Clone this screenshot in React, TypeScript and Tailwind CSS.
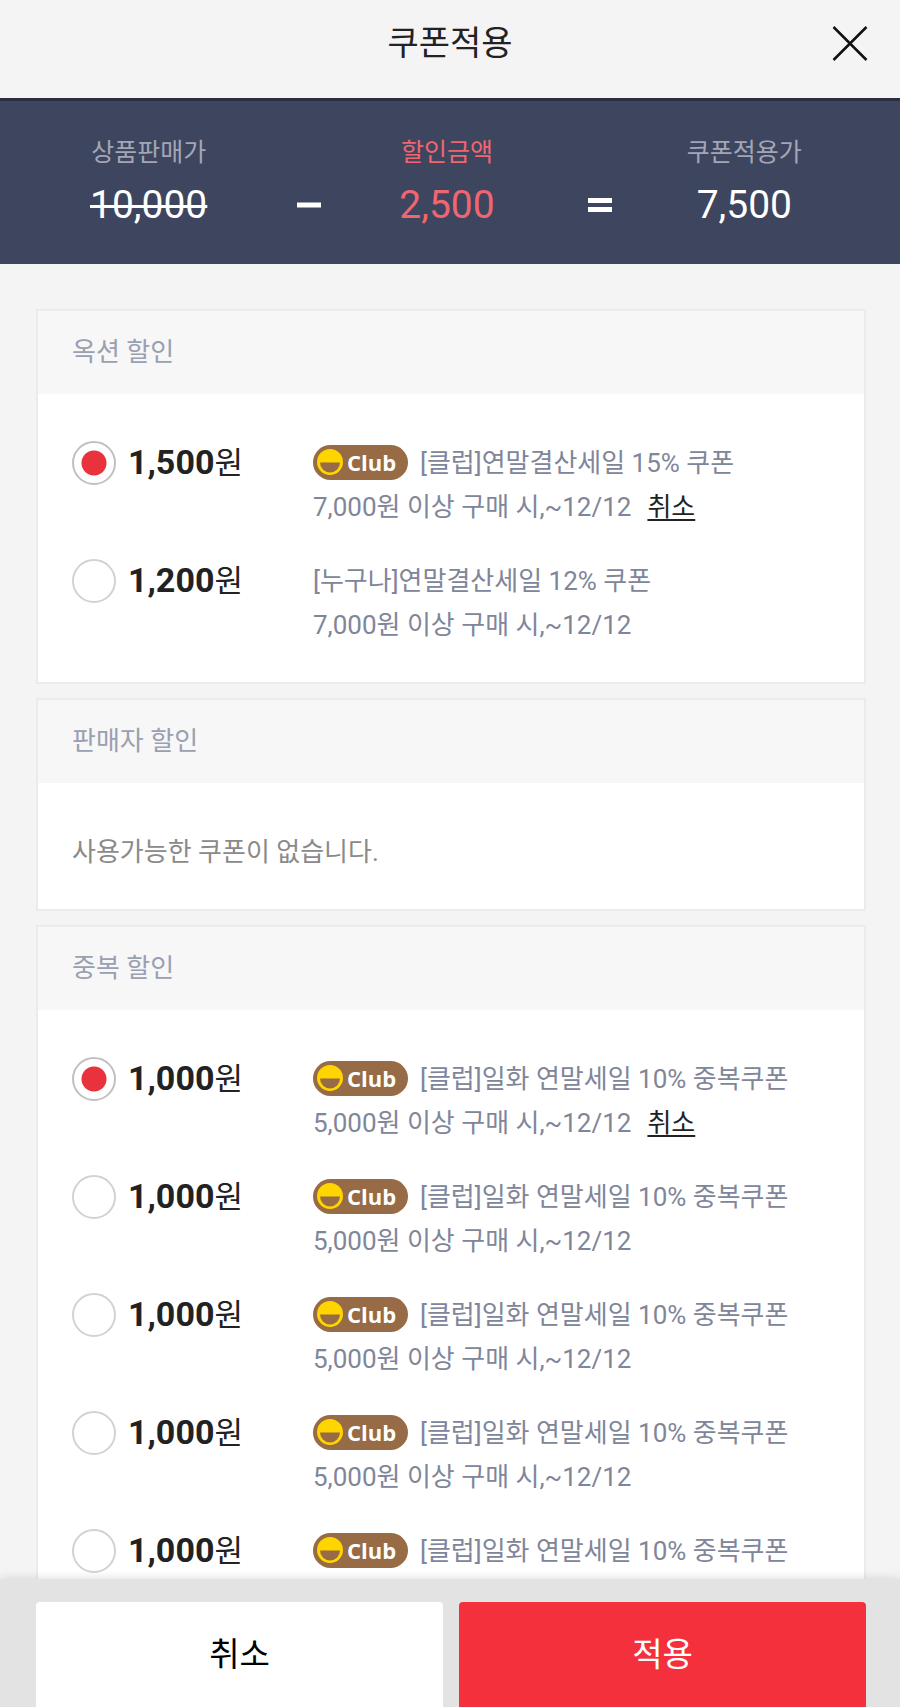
import { useState } from 'react';

type Coupon = {
  id: string;
  amount: string;
  title: string;
  condition?: string;
  club?: boolean;
};

const auctionCoupons: Coupon[] = [
  { id: 'a1', amount: '1,500', title: '[클럽]연말결산세일 15% 쿠폰', condition: '7,000원 이상 구매 시,~12/12', club: true },
  { id: 'a2', amount: '1,200', title: '[누구나]연말결산세일 12% 쿠폰', condition: '7,000원 이상 구매 시,~12/12' },
];

const extraCoupons: Coupon[] = [
  { id: 'e1', amount: '1,000', title: '[클럽]일화 연말세일 10% 중복쿠폰', condition: '5,000원 이상 구매 시,~12/12', club: true },
  { id: 'e2', amount: '1,000', title: '[클럽]일화 연말세일 10% 중복쿠폰', condition: '5,000원 이상 구매 시,~12/12', club: true },
  { id: 'e3', amount: '1,000', title: '[클럽]일화 연말세일 10% 중복쿠폰', condition: '5,000원 이상 구매 시,~12/12', club: true },
  { id: 'e4', amount: '1,000', title: '[클럽]일화 연말세일 10% 중복쿠폰', condition: '5,000원 이상 구매 시,~12/12', club: true },
  { id: 'e5', amount: '1,000', title: '[클럽]일화 연말세일 10% 중복쿠폰', club: true },
];

export default function App() {
  return (
    <div className="h-screen flex flex-col bg-[#f4f4f4] text-[#222] font-[Roboto,'Noto_Sans_CJK_KR',sans-serif]">
      <header className="shrink-0 h-[98px] pb-3 grid grid-cols-[1fr_auto_1fr] items-center px-8">
        <h1 className="col-start-2 text-[34px] leading-10">쿠폰적용</h1>
        <button type="button" aria-label="닫기" className="justify-self-end">
          <svg className="w-9 h-9" viewBox="0 0 36 36" fill="none" stroke="#111" strokeWidth="2.5">
            <path d="M1.5 2 34.500 35M34.500 2 1.500 35" />
          </svg>
        </button>
      </header>

      <section className="shrink-0 h-[166px] pt-[34px] bg-[#3e455f] border-t-3 border-[#2b2e42] grid grid-cols-[298fr_22fr_252fr_54fr_236fr_38fr] content-start text-center text-white">
        <SummaryItem label="상품판매가">
          <del className="decoration-3">10,000</del>
        </SummaryItem>
        <Operator sign="-" />
        <SummaryItem label="할인금액" highlight>
          2,500
        </SummaryItem>
        <Operator sign="=" />
        <SummaryItem label="쿠폰적용가">7,500</SummaryItem>
      </section>

      <main className="flex-1 min-h-0 overflow-y-auto [scrollbar-width:none] pl-9 pr-[34px] pt-[45px] pb-9">
        <div className="flex flex-col gap-[14px]">
          <Card title="옥션 할인">
            <CouponList name="auction" coupons={auctionCoupons} />
          </Card>
          <Card title="판매자 할인">
            <p className="text-[26px] leading-11 text-[#8a8a8a]">사용가능한 쿠폰이 없습니다.</p>
          </Card>
          <Card title="중복 할인">
            <CouponList name="extra" coupons={extraCoupons} />
          </Card>
        </div>
      </main>

      <footer className="relative shrink-0 h-32 overflow-hidden bg-[#e3e3e3] pl-9 pr-[34px] pt-[23px] shadow-[0_0_10px_rgba(0,0,0,0.14)]">
        <div className="grid grid-cols-2 gap-4 text-[33px]">
          <button type="button" className="h-[105px] rounded-t bg-white text-black">
            취소
          </button>
          <button type="button" className="h-[105px] rounded-t bg-[#f4303c] text-white">
            적용
          </button>
        </div>
      </footer>
    </div>
  );
}

function SummaryItem({
  label,
  highlight,
  children,
}: {
  label: string;
  highlight?: boolean;
  children: React.ReactNode;
}) {
  return (
    <div className={highlight ? 'text-[#ef6670]' : ''}>
      <p className={highlight ? 'text-[25px] leading-9' : 'text-[25px] leading-9 text-[#a3a6b6]'}>{label}</p>
      <p className="mt-[14px] text-[39px] leading-10">{children}</p>
    </div>
  );
}

function Operator({ sign }: { sign: '-' | '=' }) {
  return (
    <svg
      role="img"
      aria-label={sign}
      className="w-6 h-10 mt-[50px] justify-self-center"
      viewBox="0 0 24 40"
      fill="none"
      stroke="#fff"
      strokeWidth="5"
    >
      <path d={sign === '-' ? 'M0 20h24' : 'M0 15.500h24M0 24.500h24'} />
    </svg>
  );
}

function Card({ title, children }: { title: string; children: React.ReactNode }) {
  return (
    <section className="bg-white border-2 border-[#ebebeb]">
      <h2 className="h-[83px] px-[34px] flex items-center bg-[#f7f7f7] text-[26px] text-[#99a0b1]">{title}</h2>
      <div className="px-[34px] pt-[47px] pb-[35px]">{children}</div>
    </section>
  );
}

function CouponList({ name, coupons }: { name: string; coupons: Coupon[] }) {
  const [selected, setSelected] = useState<string | null>(coupons[0].id);

  return (
    <ul className="flex flex-col gap-[30px]">
      {coupons.map((coupon) => (
        <li key={coupon.id} className="flex items-start leading-11">
          <label className="w-[241px] h-11 shrink-0 flex items-center gap-3">
            <input
              type="radio"
              name={name}
              checked={selected === coupon.id}
              onChange={() => setSelected(coupon.id)}
              className="appearance-none w-11 h-11 shrink-0 rounded-full bg-white border-2 border-[#d2d2d2] checked:border-[#c0c0c0] checked:bg-[radial-gradient(circle,#e8333c_12px,#fff_13px)]"
            />
            <span className="text-[31px] leading-10">
              <b className="text-[34px]">{coupon.amount}</b>원
            </span>
          </label>
          <div className="text-[26px] text-[#80869a]">
            <p className="flex items-center gap-3">
              {coupon.club && <ClubBadge />}
              {coupon.title}
            </p>
            {coupon.condition && (
              <p>
                {coupon.condition}
                {selected === coupon.id && (
                  <button
                    type="button"
                    onClick={() => setSelected(null)}
                    className="ml-4 text-[#222] underline decoration-2 underline-offset-3 [text-decoration-skip-ink:none]"
                  >
                    취소
                  </button>
                )}
              </p>
            )}
          </div>
        </li>
      ))}
    </ul>
  );
}

function ClubBadge() {
  return (
    <span className="w-[95px] h-[35px] mb-[2px] pl-1 flex items-center gap-1 rounded-full bg-[#966b45] text-white text-[22px] font-bold font-['Open_Sans',sans-serif]">
      <svg className="w-[26px] h-[26px]" viewBox="0 0 26 26">
        <circle cx="13" cy="13" r="13" fill="#ffd500" />
        <path d="M3 13.500h20a10 10 0 0 1-20 0z" fill="#966b45" />
      </svg>
      Club
    </span>
  );
}
